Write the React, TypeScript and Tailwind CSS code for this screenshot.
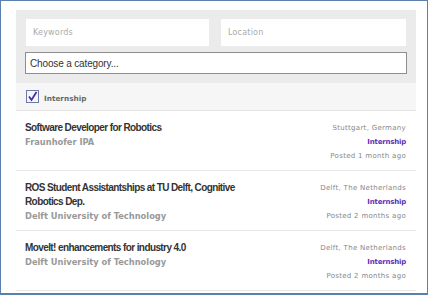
import React from "react";

const jobs = [
  {
    title: "Software Developer for Robotics",
    company: "Fraunhofer IPA",
    location: "Stuttgart, Germany",
    posted: "Posted 1 month ago",
  },
  {
    title: "ROS Student Assistantships at TU Delft, Cognitive Robotics Dep.",
    company: "Delft University of Technology",
    location: "Delft, The Netherlands",
    posted: "Posted 2 months ago",
  },
  {
    title: "MoveIt! enhancements for industry 4.0",
    company: "Delft University of Technology",
    location: "Delft, The Netherlands",
    posted: "Posted 2 months ago",
  },
];

const arial = { fontFamily: "'Liberation Sans', Arial, sans-serif" };
const small = { fontFamily: "'DejaVu Sans', Verdana, sans-serif" };

export default function App() {
  return (
    <div className="w-[428px] h-[295px] overflow-hidden bg-white border border-b-2 border-[#5b80ab] pl-[15px] pt-[9px]">
      <div className="w-[400px]">
        {/* Search filters */}
        <div className="bg-[#ebebeb] px-[10px] pt-[9px] pb-[9px]">
          <div className="flex gap-[12px]">
            <input
              placeholder="Keywords"
              className="w-[183px] h-[27px] bg-white px-[7px] text-[8px] tracking-[0.2px] placeholder:text-[#aaa] outline-none"
              style={small}
            />
            <input
              placeholder="Location"
              className="flex-1 h-[27px] bg-white px-[7px] text-[8px] tracking-[0.2px] placeholder:text-[#aaa] outline-none"
              style={small}
            />
          </div>
          <div
            className="mt-[6px] -mx-px h-[22px] border border-[#8e8e8e] bg-white flex items-center px-[4px] text-[10px] tracking-[-0.15px] text-[#333]"
            style={arial}
          >
            Choose a category...
          </div>
        </div>

        {/* Type filter */}
        <div className="h-[28px] bg-[#f6f6f6] border-b border-[#e4e4e4] flex items-center pl-[10px] gap-[5px]">
          <div className="w-[13px] h-[13px] border border-[#6d7aa8] bg-[#f4f4fb] flex items-center justify-center">
            <svg width="11" height="11" viewBox="0 0 11 11">
              <path d="M2 5.5 L4.5 9 L9.5 1" fill="none" stroke="#4b2ea3" strokeWidth="1.8" />
            </svg>
          </div>
          <span className="text-[7.3px] font-bold text-[#6a6a6a] mt-[5px]" style={small}>
            Internship
          </span>
        </div>

        {/* Job list */}
        {jobs.map((job) => (
          <div key={job.title} className="flex justify-between border-b border-[#e8e8e8] pl-[9px] pr-[10px] pt-[10px] pb-[7px]">
            <div className="w-[230px]">
              <div className="text-[10px] font-bold text-[#333] leading-[14px] tracking-[-0.6px]" style={arial}>
                {job.title}
              </div>
              <div className="text-[8.3px] font-bold text-[#999] leading-[14px]" style={small}>
                {job.company}
              </div>
            </div>
            <div className="flex flex-col items-end text-[7px] leading-[14px] tracking-[0.3px] text-[#888]" style={small}>
              <span>{job.location}</span>
              <span className="font-bold text-[#5b2fb6] tracking-[-0.2px]">Internship</span>
              <span>{job.posted}</span>
            </div>
          </div>
        ))}
      </div>
    </div>
  );
}
